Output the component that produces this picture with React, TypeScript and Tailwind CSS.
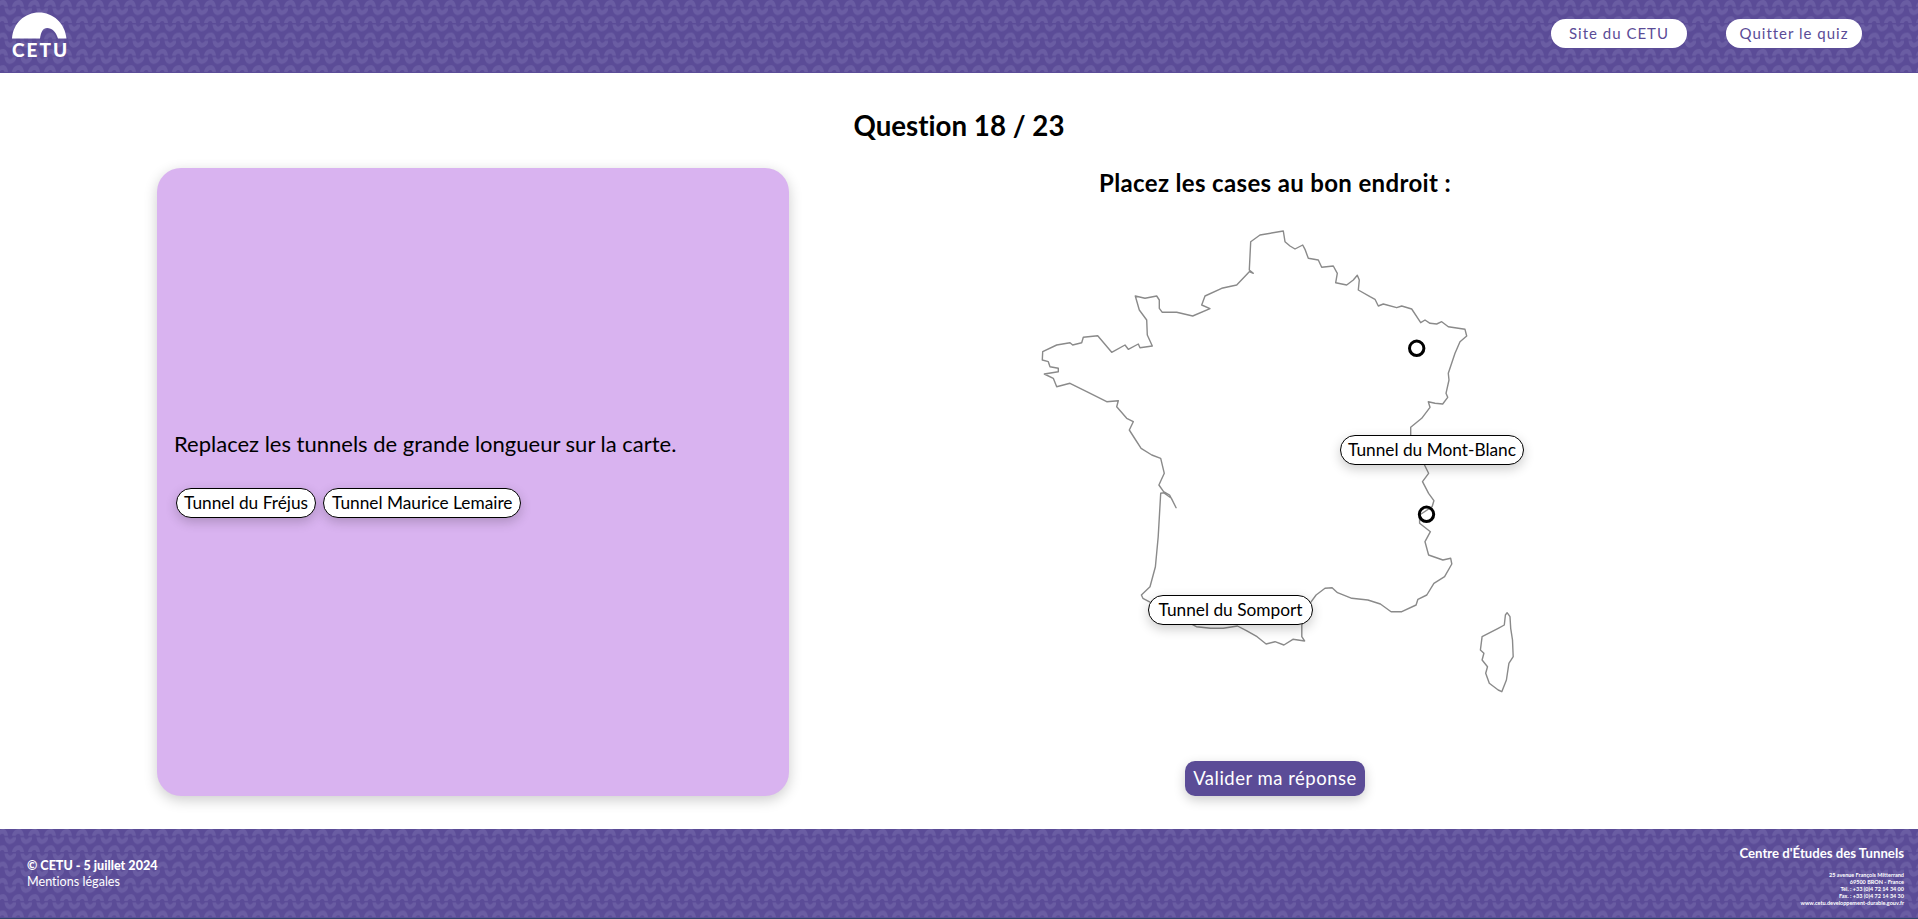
import React from "react";

const z3: number[][] = [[850,63],[855,95],[870,108],[885,117],[908,105],[915,118],[925,145],[955,150],[965,172],[1000,168],[1012,190],[1007,218],[1040,225],[1060,210],[1072,196],[1078,210],[1075,240],[1110,260],[1125,268],[1135,288],[1150,282],[1190,293],[1205,288],[1235,297],[1262,338],[1275,330],[1290,340],[1310,342],[1325,335],[1345,350],[1395,358],[1400,378],[1380,395],[1365,430],[1345,490],[1347,510],[1338,550],[1343,562],[1328,582],[1305,580],[1285,575],[1290,592],[1265,625],[1232,652],[1232,680]];
const z4: number[][] = [[1190,78],[1200,100],[1183,125],[1200,160],[1215,182],[1210,200],[1175,225],[1175,250],[1205,275],[1190,305],[1200,345],[1240,360],[1262,355],[1265,372],[1245,410],[1215,430],[1195,465],[1170,478],[1165,495],[1125,515],[1095,515],[1065,492],[1030,480],[985,475],[945,458],[930,443],[910,445],[885,465],[870,487],[845,555],[845,590],[853,603],[820,598],[795,615],[770,605],[745,612],[720,590],[690,572],[665,558],[625,565],[590,565],[550,560],[400,475],[396,465],[420,440],[435,380],[443,290],[450,160],[458,158],[480,175],[493,203],[475,165],[458,155],[445,135],[460,100],[450,55],[425,45],[395,25],[380,0]];
const z3b: number[][] = [[388,660],[400,635],[380,625],[350,590],[355,572],[320,575],[260,545],[210,520],[170,530],[160,505],[133,492],[175,485],[175,475],[150,470],[145,455],[127,450],[128,425],[170,405],[210,398],[218,405],[245,398],[250,382],[293,377],[335,427],[375,405],[385,418],[415,402],[420,413],[457,408],[442,375],[440,330],[418,300],[406,258],[435,265],[470,258],[478,270],[478,295],[487,307],[530,307],[578,318],[630,296],[605,285],[615,258],[665,235],[710,225],[748,185],[760,190],[748,180],[752,95],[780,75],[850,63]];
const corsica: number[][] = [[1420,518],[1428,530],[1430,565],[1435,600],[1437,650],[1425,670],[1418,720],[1405,755],[1395,750],[1370,730],[1360,700],[1365,680],[1350,660],[1355,640],[1345,630],[1350,590],[1395,565],[1412,555],[1415,525],[1420,518]];

const a = (p: number[][], ox: number, oy: number, sx: number) => p.map(([x, y]) => `${(x / sx + ox).toFixed(1)} ${(y / 3 + oy).toFixed(1)}`);
const franceD = "M" + [...a(z3, 1000, 210, 3), ...a(z4, 1000, 440, 2.8), ...a(z3b, 1000, 210, 3)].join("L") + "Z";
const corsicaD = "M" + a(corsica, 1000, 440, 2.8).join("L") + "Z";

function Pattern({ id }: { id: string }) {
  const dome = "M0 6.8C0.5 2.8 3.5 0 7 0C9.5 0 11.5 2.5 12 6.8L8.5 6.8C8.2 5.4 7.4 4.8 6.3 4.8C5.2 4.8 4 5.4 3.5 6.8Z";
  const bowl = "M0 0C0.5 4.2 2.5 6.8 5 6.8C8.5 6.8 11.5 4 12 0L8.5 0C8 1.4 6.8 2 5.7 2C4.6 2 3.8 1.4 3.5 0Z";
  return (
    <svg className="absolute inset-0 w-full h-full" aria-hidden="true">
      <defs>
        <pattern id={id} width="16" height="16.3" patternUnits="userSpaceOnUse">
          <path d={dome} transform="translate(12 0)" fill="#6a5da3" />
          <path d={dome} transform="translate(-4 0)" fill="#6a5da3" />
          <path d={bowl} transform="translate(4.5 8.2)" fill="#6a5da3" />
        </pattern>
      </defs>
      <rect width="100%" height="100%" fill={`url(#${id})`} />
    </svg>
  );
}

function Chip({ children, className = "px-[7px]" }: { children: React.ReactNode; className?: string }) {
  return (
    <span className={`inline-block bg-white text-black text-[17.3px] leading-[28px] border border-black rounded-[15px] shadow-[0_4px_12px_rgba(0,0,0,0.2)] whitespace-nowrap ${className}`}>
      {children}
    </span>
  );
}

export default function App() {
  return (
    <div className="w-[1918px] h-[919px] flex flex-col bg-white text-black overflow-hidden [font-variant-ligatures:none] font-['Lato','Liberation_Sans',sans-serif]">
      <header className="relative h-[73px] bg-[#5b4c97] flex items-center justify-between shrink-0">
        <Pattern id="p1" />
        <div className="relative ml-[12px] mt-[-2px] w-[56px] flex flex-col text-white">
          <svg width="55" height="27" viewBox="0 0 55 27">
            <path d="M0 26.5C1 11 13 0.5 27 0.5C41 0.5 53 11 54.5 26.5L46 26.5C44 20 40 16 35 16C31 16 29 20 28 26.5Z" fill="#fff" />
          </svg>
          <span className="mt-[1px] text-[19px] leading-[19px] font-black tracking-[2px] whitespace-nowrap">CETU</span>
        </div>
        <nav className="relative flex gap-[39px] mr-[56px] mt-[-6px] text-[15px] tracking-[1px] text-[#5b4c97]">
          <a className="w-[136px] h-[29px] bg-white rounded-full flex items-center justify-center">Site du CETU</a>
          <a className="w-[136px] h-[29px] bg-white rounded-full flex items-center justify-center">Quitter le quiz</a>
        </nav>
      </header>

      <main className="flex-1 flex flex-col items-center">
        <h1 className="mt-[36px] text-[27.7px] leading-[34px] font-bold">Question 18 / 23</h1>
        <div className="w-full flex mt-[25px] pl-[157px]">
          <section className="w-[632px] h-[628px] bg-[#d9b3f0] rounded-[24px] shadow-[0_4px_14px_rgba(0,0,0,0.2)] flex flex-col justify-center px-[17px] pb-[18px]">
            <p className="text-[22px] leading-[30px]">Replacez les tunnels de grande longueur sur la carte.</p>
            <div className="flex gap-[7px] mt-[29px] ml-[2px]">
              <Chip>Tunnel du Fréjus</Chip>
              <Chip className="px-[8px]">Tunnel Maurice Lemaire</Chip>
            </div>
          </section>
          <section className="w-[980px] flex flex-col items-center relative">
            <h2 className="text-[24px] leading-[30px] font-bold mr-[8px] tracking-[0.35px]">Placez les cases au bon endroit :</h2>
            <svg className="mt-[26px]" width="520" height="500" viewBox="1019 224 520 500">
              <path d={franceD} fill="none" stroke="#8a8a8a" strokeWidth="1.4" strokeLinejoin="round" />
              <path d={corsicaD} fill="none" stroke="#8a8a8a" strokeWidth="1.4" strokeLinejoin="round" />
              <circle cx="1416.7" cy="348.3" r="7.2" fill="#fff" stroke="#000" strokeWidth="3" />
              <circle cx="1426.5" cy="514.3" r="7.2" fill="none" stroke="#000" strokeWidth="3" />
            </svg>
            <Chip className="absolute left-[551px] top-[267px] px-[7px]">Tunnel du Mont-Blanc</Chip>
            <Chip className="absolute left-[359px] top-[427px] px-[9.5px]">Tunnel du Somport</Chip>
            <button className="mt-[37px] mr-[8px] w-[180px] h-[35px] bg-[#5b4c97] text-white text-[18.5px] tracking-[0.5px] rounded-[10px] shadow-[0_4px_12px_rgba(0,0,0,0.2)]">Valider ma réponse</button>
          </section>
        </div>
      </main>

      <footer className="relative h-[90px] bg-[#5b4c97] border-b border-[#2f4a6b] text-white shrink-0 flex justify-between">
        <Pattern id="p2" />
        <div className="relative ml-[27px] mt-[29px] text-[12.6px] leading-[16px]">
          <div className="font-black">© CETU - 5 juillet 2024</div>
          <div>Mentions légales</div>
        </div>
        <div className="relative mr-[14px] mt-[16px] text-right">
          <div className="text-[13.2px] leading-[16px] font-bold mb-[11px]">Centre d'Études des Tunnels</div>
          <div className="text-[5.5px] leading-[7px] font-bold">
            <div>25 avenue François Mitterrand</div>
            <div>69500 BRON - France</div>
            <div>Tél. : +33 (0)4 72 14 34 00</div>
            <div>Fax. : +33 (0)4 72 14 34 30</div>
            <div>www.cetu.developpement-durable.gouv.fr</div>
          </div>
        </div>
      </footer>
    </div>
  );
}
